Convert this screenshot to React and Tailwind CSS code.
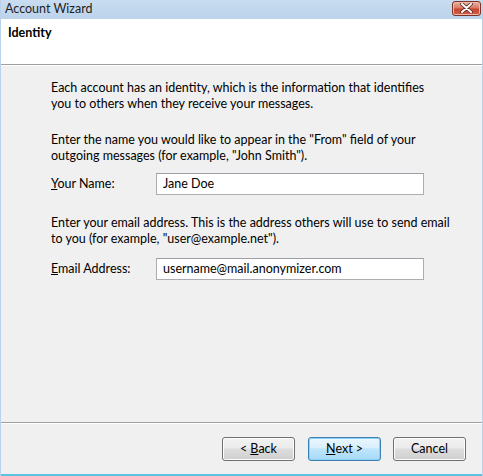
import React from "react";

const font = { fontFamily: "Lato, 'Noto Sans', sans-serif" };

function Btn({ children, primary }) {
  return (
    <div
      className={
        "w-[73px] h-[24px] rounded-[3px] border flex items-center justify-center text-[12.5px] text-black " +
        (primary
          ? "border-[#3c7fb1] shadow-[inset_0_0_0_1px_#8ed2f3] bg-[linear-gradient(to_bottom,#eaf6fd_0%,#d9f0fc_45%,#bee6fd_50%,#a7d9f5_100%)]"
          : "border-[#707070] shadow-[inset_0_0_0_1px_#fcfcfc] bg-[linear-gradient(to_bottom,#f2f2f2_0%,#ebebeb_45%,#dddddd_50%,#cfcfcf_100%)]")
      }
    >
      {children}
    </div>
  );
}

export default function App() {
  return (
    <div
      className="w-[483px] h-[476px] flex flex-col bg-[#f0f0f0] border-l border-r border-[#b9d1ea] text-black text-[12.5px] overflow-hidden"
      style={font}
    >
      {/* Title bar */}
      <div className="h-[19px] shrink-0 flex items-center justify-between bg-[linear-gradient(to_bottom,#c9dcf0,#bcd3ea)]">
        <span className="pl-[4px] text-[12.5px] text-[#1e1e1e] leading-none">Account Wizard</span>
        <div className="mr-[1px] mb-[3px] w-[29px] h-[15px] rounded-[3px] border border-[#7a3326] bg-[linear-gradient(to_bottom,#eab4a6_0%,#d77a64_45%,#c7452f_55%,#d06048_100%)] shadow-[inset_0_0_0_1px_#f0b8a8] flex items-center justify-center">
          <svg width="13" height="10" viewBox="0 0 13 10">
            <path
              d="M2 1 L11 9 M11 1 L2 9"
              stroke="#5a2a20"
              strokeWidth="3.6"
              strokeLinecap="round"
            />
            <path
              d="M2 1 L11 9 M11 1 L2 9"
              stroke="#ffffff"
              strokeWidth="2"
              strokeLinecap="round"
            />
          </svg>
        </div>
      </div>

      {/* Header */}
      <div className="h-[46px] shrink-0 bg-white border-b border-[#a0a0a0] pl-[7px] pt-[5px]">
        <span className="font-bold text-[12.5px]">Identity</span>
      </div>
      <div className="h-px shrink-0 bg-white"></div>

      {/* Body */}
      <div className="flex-1 pl-[50px] pr-[30px] pt-[14px] leading-[16px]">
        <p className="whitespace-nowrap">
          Each account has an identity, which is the information that identifies
          <br />
          you to others when they receive your messages.
        </p>
        <p className="mt-[20px] whitespace-nowrap">
          Enter the name you would like to appear in the "From" field of your
          <br />
          outgoing messages (for example, "John Smith").
        </p>
        <div className="mt-[9px] flex items-center">
          <span className="w-[105px]">
            <span className="underline">Y</span>our Name:
          </span>
          <div className="w-[268px] h-[22px] bg-white border border-[#abadb3] border-t-[#9c9fa6] flex items-center pl-[6px]">
            Jane Doe
          </div>
        </div>
        <p className="mt-[20px] whitespace-nowrap">
          Enter your email address. This is the address others will use to send email
          <br />
          to you (for example, "user@example.net").
        </p>
        <div className="mt-[11px] flex items-center">
          <span className="w-[105px]">
            <span className="underline">E</span>mail Address:
          </span>
          <div className="w-[268px] h-[22px] bg-white border border-[#abadb3] border-t-[#9c9fa6] flex items-center pl-[6px]">
            username@mail.anonymizer.com
          </div>
        </div>
      </div>

      {/* Footer */}
      <div className="h-px shrink-0 bg-[#a0a0a0]"></div>
      <div className="h-px shrink-0 bg-white"></div>
      <div className="h-[50px] shrink-0 flex justify-end items-start pt-[13px] pr-[16px]">
        <Btn>
          &lt; <span className="underline ml-[3px]">B</span>ack
        </Btn>
        <div className="w-[13px]"></div>
        <Btn primary>
          <span className="underline">N</span>ext &gt;
        </Btn>
        <div className="w-[12px]"></div>
        <Btn>Cancel</Btn>
      </div>
      <div className="h-[2px] shrink-0 bg-[#5bc3e2]"></div>
    </div>
  );
}
